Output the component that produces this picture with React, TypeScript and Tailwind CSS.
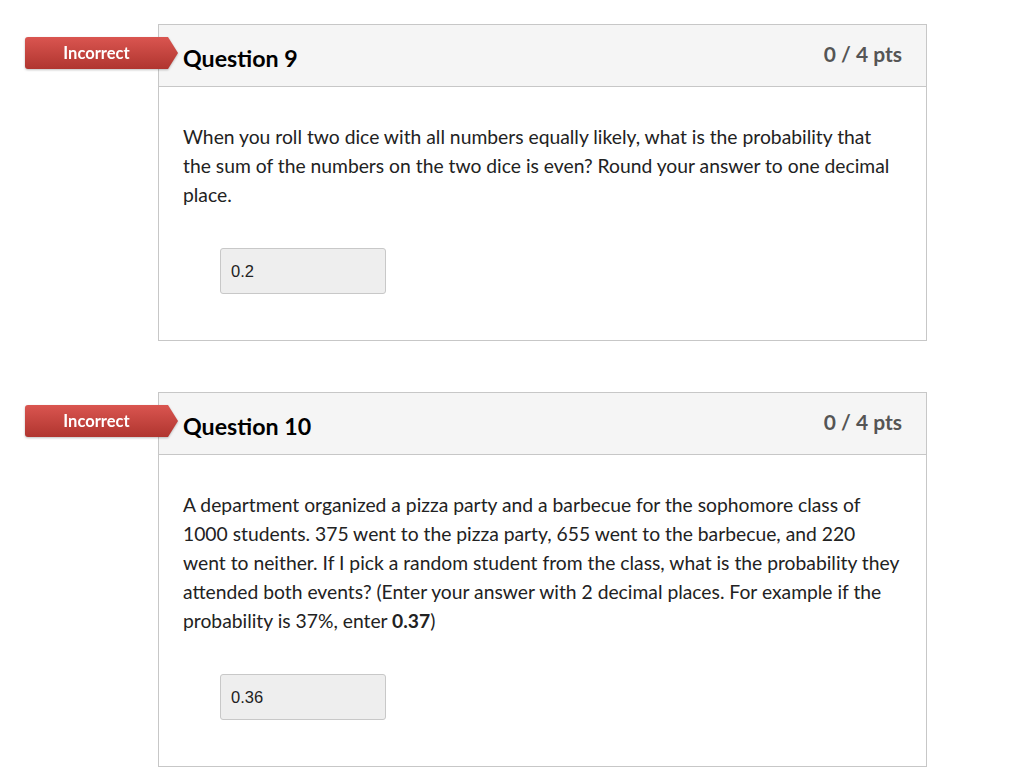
export default function App() {
  return (
    <div className="min-h-screen bg-white font-['Lato','Noto_Sans',sans-serif] text-[#222]">
      <div className="flex flex-col gap-[51px] pl-[158px] pt-[24px]">
        <QuestionCard title="Question 9" answer="0.2">
          When you roll two dice with all numbers equally likely, what is the probability that the
          sum of the numbers on the two dice is even? Round your answer to one decimal place.
        </QuestionCard>

        <QuestionCard title="Question 10" answer="0.36">
          A department organized a pizza party and a barbecue for the sophomore class of 1000
          students. 375 went to the pizza party, 655 went to the barbecue, and 220 went to
          neither. If I pick a random student from the class, what is the probability they
          attended both events? (Enter your answer with 2 decimal places. For example if the
          probability is 37%, enter <strong className="font-bold">0.37</strong>)
        </QuestionCard>
      </div>
    </div>
  );
}

/* ================= QUESTION CARD ================= */
function QuestionCard({
  title,
  answer,
  children,
}: {
  title: string;
  answer: string;
  children: React.ReactNode;
}) {
  return (
    <div className="relative w-[769px] border border-[#c7c7c7]">
      {/* result badge */}
      <div className="absolute left-[-134px] top-[12px] flex drop-shadow-[0_1px_1px_rgba(0,0,0,0.25)]">
        <div className="flex h-[32px] w-[143px] items-center justify-center rounded-l-[3px] bg-gradient-to-b from-[#da5550] to-[#b0352f] text-[16.5px] font-bold text-white">
          Incorrect
        </div>
        <div className="h-[32px] w-[10px] bg-gradient-to-b from-[#da5550] to-[#b0352f] [clip-path:polygon(0_0,100%_50%,0_100%)]" />
      </div>

      <div className="flex h-[62px] justify-between border-b border-[#c7c7c7] bg-[#f5f5f5] pl-[24px] pr-[24px]">
        <h2 className="pt-[19px] text-[23.2px] font-bold leading-[28px] text-black">{title}</h2>
        <span className="pt-[16px] text-[21px] font-bold leading-[26px] text-[#555]">0 / 4 pts</span>
      </div>

      <div className="pl-[24px] pr-[24px] pt-[35px] pb-[46px]">
        <p className="text-[19.3px] leading-[29px]">{children}</p>
        <div className="mt-[39px] ml-[37px] flex h-[46px] w-[166px] items-center rounded-[3px] border border-[#c8c8c8] bg-[#eeeeee] px-[10px] font-['Liberation_Sans',Arial,sans-serif] text-[16.5px] text-[#222]">
          {answer}
        </div>
      </div>
    </div>
  );
}
